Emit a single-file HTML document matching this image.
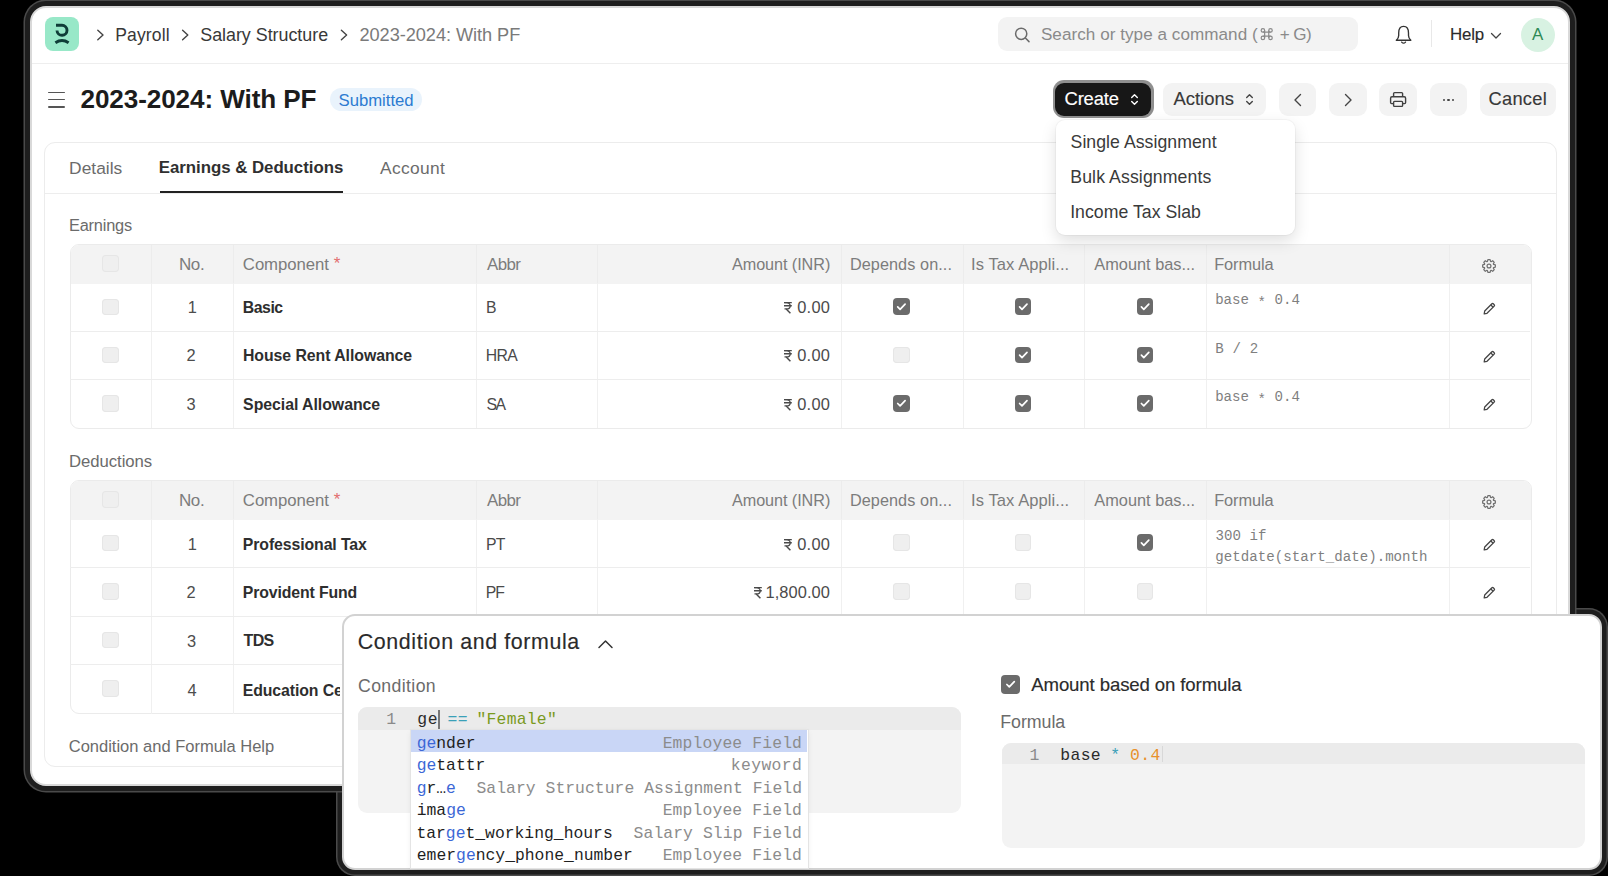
<!DOCTYPE html>
<html><head><meta charset="utf-8"><style>
html,body{margin:0;padding:0;width:1608px;height:876px;overflow:hidden;background:#000;}
body{position:relative;font-family:"Liberation Sans",sans-serif;}
svg{position:absolute;overflow:visible}
</style></head><body>
<div style="position:absolute;left:342px;top:614px;width:1260px;height:256px;border-radius:13px;background:#111;box-shadow:0 0 0 4.5px #1e1e1e,0 0 0 6px #4a4a4a;"></div>
<div style="position:absolute;left:30px;top:6px;width:1540px;height:780px;box-sizing:border-box;background:#fff;border:2px solid #d9d9d9;border-radius:16px;box-shadow:0 0 0 5px #1e1e1e,0 0 0 6.5px #4a4a4a;"></div>
<div style="position:absolute;left:32px;top:63px;width:1536px;height:1px;background:#eeeeee;"></div>
<div style="position:absolute;left:45px;top:17px;width:34px;height:34px;background:#98e8c8;border-radius:8px;"></div>
<svg style="left:0;top:0" width="1" height="1"><g fill="none" stroke="#0f3d38" stroke-width="2.9" stroke-linecap="butt"><path d="M56 25.3 H62 A5 5 0 1 1 57 30.5"/><path d="M55.4 42.7 Q62 38.4 68.6 42.7"/></g></svg>
<svg style="left:0;top:0" width="1" height="1"><path d="M97.8 30.2 L103.0 35.0 L97.8 39.8" fill="none" stroke="#444" stroke-width="1.4" stroke-linecap="round" stroke-linejoin="round"/></svg>
<svg style="left:0;top:0" width="1" height="1"><path d="M182.6 30.2 L187.79999999999998 35.0 L182.6 39.8" fill="none" stroke="#444" stroke-width="1.4" stroke-linecap="round" stroke-linejoin="round"/></svg>
<svg style="left:0;top:0" width="1" height="1"><path d="M341.4 30.2 L346.59999999999997 35.0 L341.4 39.8" fill="none" stroke="#444" stroke-width="1.4" stroke-linecap="round" stroke-linejoin="round"/></svg>
<div id="t0" style="position:absolute;left:115.19px;top:27.00px;font-family:'Liberation Sans', sans-serif;font-size:17.539px;line-height:17.539px;font-weight:400;color:#383838;white-space:pre;letter-spacing:0.142px;">Payroll</div>
<div id="t1" style="position:absolute;left:200.24px;top:27.00px;font-family:'Liberation Sans', sans-serif;font-size:17.882px;line-height:17.882px;font-weight:400;color:#383838;white-space:pre;letter-spacing:-0.019px;">Salary Structure</div>
<div id="t2" style="position:absolute;left:359.48px;top:26.00px;font-family:'Liberation Sans', sans-serif;font-size:18.209px;line-height:18.209px;font-weight:400;color:#7a7a7a;white-space:pre;letter-spacing:-0.055px;">2023-2024: With PF</div>
<div style="position:absolute;left:998px;top:17px;width:360px;height:34px;background:#f3f3f3;border-radius:9px;"></div>
<svg style="left:0;top:0" width="1" height="1"><g fill="none" stroke="#6b6b6b" stroke-width="1.5" stroke-linecap="round"><circle cx="1021.2" cy="33.8" r="5.6"/><path d="M1025.4 38 L1029 41.6"/></g></svg>
<div id="t3" style="position:absolute;left:1040.93px;top:26.00px;font-family:'Liberation Sans', sans-serif;font-size:17.102px;line-height:17.102px;font-weight:400;color:#8a8a8a;white-space:pre;letter-spacing:0.045px;">Search or type a command (</div>
<svg style="left:0;top:0" width="1" height="1"><g fill="none" stroke="#8a8a8a" stroke-width="1.2"><circle cx="1262.9" cy="30.4" r="1.75"/><circle cx="1270.5" cy="30.4" r="1.75"/><circle cx="1262.9" cy="37.9" r="1.75"/><circle cx="1270.5" cy="37.9" r="1.75"/><path d="M1264.65 30.4 V37.9 M1268.75 30.4 V37.9 M1262.9 32.15 H1270.5 M1262.9 36.15 H1270.5"/></g></svg>
<div id="t4" style="position:absolute;left:1279.83px;top:26.00px;font-family:'Liberation Sans', sans-serif;font-size:17.102px;line-height:17.102px;font-weight:400;color:#8a8a8a;white-space:pre;letter-spacing:-0.654px;">+ G)</div>
<svg style="left:0;top:0" width="1" height="1"><g fill="none" stroke="#333" stroke-width="1.35" stroke-linejoin="round" stroke-linecap="round"><path d="M1396.3 40.2 Q1398.7 38.3 1398.7 35.5 V33 Q1398.7 26.4 1403.6 26.4 Q1408.5 26.4 1408.5 33 V35.5 Q1408.5 38.3 1410.9 40.2 Z"/><path d="M1401.7 42.1 Q1403.6 44.3 1405.5 42.1"/></g></svg>
<div style="position:absolute;left:1431px;top:20px;width:1px;height:27px;background:#e8e8e8;"></div>
<div id="t5" style="position:absolute;left:1449.98px;top:27.00px;font-family:'Liberation Sans', sans-serif;font-size:16.867px;line-height:16.867px;font-weight:400;color:#2b2b2b;white-space:pre;letter-spacing:-0.146px;-webkit-text-stroke:0.15px currentColor;">Help</div>
<svg style="left:0;top:0" width="1" height="1"><path d="M1491.5 33.5 L1496 38 L1500.5 33.5" fill="none" stroke="#444" stroke-width="1.3" stroke-linecap="round" stroke-linejoin="round"/></svg>
<div style="position:absolute;left:1521px;top:17.5px;width:34px;height:34.0px;background:#d8f2e2;border-radius:50%;"></div>
<div id="t6" style="position:absolute;left:1532.01px;top:27.00px;font-family:'Liberation Sans', sans-serif;font-size:16.860px;line-height:16.860px;font-weight:400;color:#2e8a55;white-space:pre;letter-spacing:0.000px;">A</div>
<div style="position:absolute;left:47.5px;top:91.5px;width:17.5px;height:1.5px;background:#555;border-radius:1px;"></div>
<div style="position:absolute;left:47.5px;top:98.8px;width:17.5px;height:1.5px;background:#555;border-radius:1px;"></div>
<div style="position:absolute;left:47.5px;top:106px;width:17.5px;height:1.5px;background:#555;border-radius:1px;"></div>
<div id="t7" style="position:absolute;left:80.51px;top:86.00px;font-family:'Liberation Sans', sans-serif;font-size:26.102px;line-height:26.102px;font-weight:700;color:#1c1c1c;white-space:pre;letter-spacing:-0.092px;">2023-2024: With PF</div>
<div style="position:absolute;left:329.5px;top:88px;width:92.5px;height:23px;background:#e9f3fc;border-radius:12px;"></div>
<div id="t8" style="position:absolute;left:338.52px;top:93.00px;font-family:'Liberation Sans', sans-serif;font-size:16.714px;line-height:16.714px;font-weight:400;color:#2c7bd1;white-space:pre;letter-spacing:-0.015px;">Submitted</div>
<div style="position:absolute;left:1052.5px;top:80px;width:101.0px;height:38px;background:#8f8f8f;border-radius:11px;"></div>
<div style="position:absolute;left:1055px;top:82.5px;width:96px;height:33.3px;background:#171717;border-radius:9px;"></div>
<div id="t9" style="position:absolute;left:1064.54px;top:90.00px;font-family:'Liberation Sans', sans-serif;font-size:18.414px;line-height:18.414px;font-weight:400;color:#ffffff;white-space:pre;letter-spacing:-0.178px;-webkit-text-stroke:0.15px currentColor;">Create</div>
<svg style="left:0;top:0" width="1" height="1"><g fill="none" stroke="#ffffff" stroke-width="1.4" stroke-linecap="round" stroke-linejoin="round"><path d="M1131.7 97.5 L1134.5 94.7 L1137.3 97.5"/><path d="M1131.7 101.5 L1134.5 104.3 L1137.3 101.5"/></g></svg>
<div style="position:absolute;left:1163px;top:83px;width:103px;height:32.5px;background:#f3f3f3;border-radius:9px;"></div>
<div id="t10" style="position:absolute;left:1173.39px;top:90.00px;font-family:'Liberation Sans', sans-serif;font-size:18.414px;line-height:18.414px;font-weight:400;color:#383838;white-space:pre;letter-spacing:0.034px;-webkit-text-stroke:0.15px currentColor;">Actions</div>
<svg style="left:0;top:0" width="1" height="1"><g fill="none" stroke="#444" stroke-width="1.4" stroke-linecap="round" stroke-linejoin="round"><path d="M1246.7 97.5 L1249.5 94.7 L1252.3 97.5"/><path d="M1246.7 101.5 L1249.5 104.3 L1252.3 101.5"/></g></svg>
<div style="position:absolute;left:1278.5px;top:83px;width:37.5px;height:32.5px;background:#f3f3f3;border-radius:9px;"></div>
<div style="position:absolute;left:1329px;top:83px;width:38px;height:32.5px;background:#f3f3f3;border-radius:9px;"></div>
<div style="position:absolute;left:1379px;top:83px;width:38px;height:32.5px;background:#f3f3f3;border-radius:9px;"></div>
<div style="position:absolute;left:1430px;top:83px;width:37px;height:32.5px;background:#f3f3f3;border-radius:9px;"></div>
<div style="position:absolute;left:1480px;top:83px;width:75.5px;height:32.5px;background:#f3f3f3;border-radius:9px;"></div>
<svg style="left:0;top:0" width="1" height="1"><g fill="none" stroke="#444" stroke-width="1.4" stroke-linecap="round" stroke-linejoin="round"><path d="M1300.5 94.5 L1295 100 L1300.5 105.5"/><path d="M1345.5 94.5 L1351 100 L1345.5 105.5"/></g></svg>
<svg style="left:0;top:0" width="1" height="1"><g fill="none" stroke="#404040" stroke-width="1.4" stroke-linejoin="round"><path d="M1393.6 96.6 V93.6 Q1393.6 92.6 1394.6 92.6 H1401.6 Q1402.6 92.6 1402.6 93.6 V96.6"/><path d="M1393.4 103.6 H1391.6 Q1390.6 103.6 1390.6 102.6 V98.2 Q1390.6 96.8 1392 96.8 H1404.2 Q1405.6 96.8 1405.6 98.2 V102.6 Q1405.6 103.6 1404.6 103.6 H1402.8"/><rect x="1393.6" y="101.4" width="9" height="5" rx="0.9"/></g></svg>
<div style="position:absolute;left:1443.2px;top:98.9px;width:2.199999999999818px;height:2.1999999999999886px;background:#444;border-radius:50%;"></div>
<div style="position:absolute;left:1447.4px;top:98.9px;width:2.199999999999818px;height:2.1999999999999886px;background:#444;border-radius:50%;"></div>
<div style="position:absolute;left:1451.6000000000001px;top:98.9px;width:2.199999999999818px;height:2.1999999999999886px;background:#444;border-radius:50%;"></div>
<div id="t11" style="position:absolute;left:1488.51px;top:90.00px;font-family:'Liberation Sans', sans-serif;font-size:18.265px;line-height:18.265px;font-weight:400;color:#383838;white-space:pre;letter-spacing:0.279px;-webkit-text-stroke:0.15px currentColor;">Cancel</div>
<div style="position:absolute;left:43.8px;top:142px;width:1511px;height:623px;border:1px solid #ececec;border-radius:11px;"></div>
<div style="position:absolute;left:45px;top:193px;width:1511px;height:1px;background:#ededed;"></div>
<div id="t12" style="position:absolute;left:69.12px;top:160.00px;font-family:'Liberation Sans', sans-serif;font-size:17.366px;line-height:17.366px;font-weight:400;color:#6b6b6b;white-space:pre;letter-spacing:0.019px;">Details</div>
<div id="t13" style="position:absolute;left:158.82px;top:160.00px;font-family:'Liberation Sans', sans-serif;font-size:16.831px;line-height:16.831px;font-weight:700;color:#303030;white-space:pre;letter-spacing:-0.035px;">Earnings &amp; Deductions</div>
<div id="t14" style="position:absolute;left:379.98px;top:160.00px;font-family:'Liberation Sans', sans-serif;font-size:17.366px;line-height:17.366px;font-weight:400;color:#6b6b6b;white-space:pre;letter-spacing:0.339px;">Account</div>
<div style="position:absolute;left:159.6px;top:191.2px;width:183.79999999999998px;height:1.8000000000000114px;background:#222;"></div>
<div id="t15" style="position:absolute;left:68.93px;top:217.00px;font-family:'Liberation Sans', sans-serif;font-size:16.395px;line-height:16.395px;font-weight:400;color:#6b6b6b;white-space:pre;letter-spacing:-0.190px;">Earnings</div>
<div style="position:absolute;left:69.5px;top:243.5px;width:1460px;height:183.09999999999997px;border:1px solid #ebebeb;border-radius:9px;overflow:hidden;"><div style="position:absolute;left:0;top:0;right:0;height:39.2px;background:#f3f3f3;"></div></div>
<div style="position:absolute;left:151px;top:245px;width:1px;height:38.19999999999999px;background:#ececec;"></div>
<div style="position:absolute;left:151px;top:283.2px;width:1px;height:144.89999999999998px;background:#f0f0f0;"></div>
<div style="position:absolute;left:233px;top:245px;width:1px;height:38.19999999999999px;background:#ececec;"></div>
<div style="position:absolute;left:233px;top:283.2px;width:1px;height:144.89999999999998px;background:#f0f0f0;"></div>
<div style="position:absolute;left:476px;top:245px;width:1px;height:38.19999999999999px;background:#ececec;"></div>
<div style="position:absolute;left:476px;top:283.2px;width:1px;height:144.89999999999998px;background:#f0f0f0;"></div>
<div style="position:absolute;left:597px;top:245px;width:1px;height:38.19999999999999px;background:#ececec;"></div>
<div style="position:absolute;left:597px;top:283.2px;width:1px;height:144.89999999999998px;background:#f0f0f0;"></div>
<div style="position:absolute;left:841px;top:245px;width:1px;height:38.19999999999999px;background:#ececec;"></div>
<div style="position:absolute;left:841px;top:283.2px;width:1px;height:144.89999999999998px;background:#f0f0f0;"></div>
<div style="position:absolute;left:962.5px;top:245px;width:1.0px;height:38.19999999999999px;background:#ececec;"></div>
<div style="position:absolute;left:962.5px;top:283.2px;width:1.0px;height:144.89999999999998px;background:#f0f0f0;"></div>
<div style="position:absolute;left:1083.5px;top:245px;width:1.0px;height:38.19999999999999px;background:#ececec;"></div>
<div style="position:absolute;left:1083.5px;top:283.2px;width:1.0px;height:144.89999999999998px;background:#f0f0f0;"></div>
<div style="position:absolute;left:1205.5px;top:245px;width:1.0px;height:38.19999999999999px;background:#ececec;"></div>
<div style="position:absolute;left:1205.5px;top:283.2px;width:1.0px;height:144.89999999999998px;background:#f0f0f0;"></div>
<div style="position:absolute;left:1449px;top:245px;width:1px;height:38.19999999999999px;background:#ececec;"></div>
<div style="position:absolute;left:1449px;top:283.2px;width:1px;height:144.89999999999998px;background:#f0f0f0;"></div>
<div style="position:absolute;left:70px;top:331px;width:1460px;height:1px;background:#ededed;"></div>
<div style="position:absolute;left:70px;top:379px;width:1460px;height:1px;background:#ededed;"></div>
<div style="position:absolute;left:102.3px;top:255.2px;width:16.599999999999994px;height:16.600000000000023px;background:#efefef;border-radius:4px;box-shadow:inset 0 0 0 1px #e6e6e6;"></div>
<div id="t16" style="position:absolute;left:178.90px;top:256.00px;font-family:'Liberation Sans', sans-serif;font-size:17.006px;line-height:17.006px;font-weight:400;color:#7c7c7c;white-space:pre;letter-spacing:-0.361px;">No.</div>
<div id="t17" style="position:absolute;left:242.87px;top:257.00px;font-family:'Liberation Sans', sans-serif;font-size:16.750px;line-height:16.750px;font-weight:400;color:#7c7c7c;white-space:pre;letter-spacing:-0.078px;">Component</div>
<div id="t18" style="position:absolute;left:333.76px;top:255.00px;font-family:'Liberation Sans', sans-serif;font-size:17.006px;line-height:17.006px;font-weight:400;color:#e26d6d;white-space:pre;letter-spacing:0.000px;">*</div>
<div id="t19" style="position:absolute;left:487.01px;top:257.00px;font-family:'Liberation Sans', sans-serif;font-size:16.902px;line-height:16.902px;font-weight:400;color:#7c7c7c;white-space:pre;letter-spacing:-0.617px;">Abbr</div>
<div id="t20" style="position:absolute;left:732.01px;top:256.00px;font-family:'Liberation Sans', sans-serif;font-size:16.213px;line-height:16.213px;font-weight:400;color:#7c7c7c;white-space:pre;letter-spacing:-0.069px;">Amount (INR)</div>
<div id="t21" style="position:absolute;left:849.90px;top:256.00px;font-family:'Liberation Sans', sans-serif;font-size:16.247px;line-height:16.247px;font-weight:400;color:#7c7c7c;white-space:pre;letter-spacing:0.079px;">Depends on...</div>
<div id="t22" style="position:absolute;left:971.11px;top:257.00px;font-family:'Liberation Sans', sans-serif;font-size:16.542px;line-height:16.542px;font-weight:400;color:#7c7c7c;white-space:pre;letter-spacing:0.066px;">Is Tax Appli...</div>
<div id="t23" style="position:absolute;left:1094.30px;top:256.00px;font-family:'Liberation Sans', sans-serif;font-size:16.358px;line-height:16.358px;font-weight:400;color:#7c7c7c;white-space:pre;letter-spacing:-0.003px;">Amount bas...</div>
<div id="t24" style="position:absolute;left:1214.19px;top:256.00px;font-family:'Liberation Sans', sans-serif;font-size:16.383px;line-height:16.383px;font-weight:400;color:#7c7c7c;white-space:pre;letter-spacing:-0.101px;">Formula</div>
<svg style="left:1480.2px;top:256.7px" width="18" height="18" viewBox="0 0 24 24"><g fill="none" stroke="#707070" stroke-width="1.6" stroke-linejoin="round"><path d="M9.92 5.95 L10.51 3.53 L13.49 3.53 L14.08 5.95 L14.81 6.25 L16.93 4.96 L19.04 7.07 L17.75 9.19 L18.05 9.92 L20.47 10.51 L20.47 13.49 L18.05 14.08 L17.75 14.81 L19.04 16.93 L16.93 19.04 L14.81 17.75 L14.08 18.05 L13.49 20.47 L10.51 20.47 L9.92 18.05 L9.19 17.75 L7.07 19.04 L4.96 16.93 L6.25 14.81 L5.95 14.08 L3.53 13.49 L3.53 10.51 L5.95 9.92 L6.25 9.19 L4.96 7.07 L7.07 4.96 L9.19 6.25 Z"/><circle cx="12" cy="12" r="2.6"/></g></svg>
<div style="position:absolute;left:102.3px;top:298.5px;width:16.599999999999994px;height:16.600000000000023px;background:#efefef;border-radius:4px;box-shadow:inset 0 0 0 1px #e6e6e6;"></div>
<div id="t25" style="position:absolute;left:187.87px;top:299.00px;font-family:'Liberation Sans', sans-serif;font-size:16.424px;line-height:16.424px;font-weight:400;color:#4d4d4d;white-space:pre;letter-spacing:0.000px;">1</div>
<div id="t26" style="position:absolute;left:242.81px;top:300.00px;font-family:'Liberation Sans', sans-serif;font-size:15.849px;line-height:15.849px;font-weight:700;color:#2e2e2e;white-space:pre;letter-spacing:-0.477px;">Basic</div>
<div id="t27" style="position:absolute;left:485.97px;top:300.00px;font-family:'Liberation Sans', sans-serif;font-size:15.791px;line-height:15.791px;font-weight:400;color:#4a4a4a;white-space:pre;letter-spacing:0.000px;">B</div>
<svg style="left:784px;top:301.7px" width="9" height="12" viewBox="0 0 9 12"><g fill="none" stroke="#4a4a4a" stroke-width="1.3" stroke-linecap="butt"><path d="M0 0.65 H7.8 M0 3.75 H7.8"/><path d="M0.3 0.65 H2.4 C5.2 0.65 6.2 2.2 6.2 3.9 C6.2 5.7 4.9 6.9 2.4 6.9 H0.5"/><path d="M2.2 6.9 L6.4 11.3" stroke-width="1.45"/></g></svg>
<div id="t28" style="position:absolute;left:797.18px;top:299.00px;font-family:'Liberation Sans', sans-serif;font-size:16.424px;line-height:16.424px;font-weight:400;color:#4a4a4a;white-space:pre;letter-spacing:0.296px;">0.00</div>
<div style="position:absolute;left:893.0px;top:298.4px;width:16.59999999999991px;height:16.600000000000023px;background:#6b6b6b;border-radius:4px;"></div>
<svg style="left:0;top:0" width="1" height="1"><path d="M897.6999999999999 306.9 L900.0999999999999 309.3 L905.0999999999999 304.09999999999997" fill="none" stroke="#fff" stroke-width="1.7" stroke-linecap="round" stroke-linejoin="round"/></svg>
<div style="position:absolute;left:1014.9000000000001px;top:298.4px;width:16.59999999999991px;height:16.600000000000023px;background:#6b6b6b;border-radius:4px;"></div>
<svg style="left:0;top:0" width="1" height="1"><path d="M1019.6 306.9 L1022.0 309.3 L1027.0 304.09999999999997" fill="none" stroke="#fff" stroke-width="1.7" stroke-linecap="round" stroke-linejoin="round"/></svg>
<div style="position:absolute;left:1136.7px;top:298.4px;width:16.59999999999991px;height:16.600000000000023px;background:#6b6b6b;border-radius:4px;"></div>
<svg style="left:0;top:0" width="1" height="1"><path d="M1141.4 306.9 L1143.8 309.3 L1148.8 304.09999999999997" fill="none" stroke="#fff" stroke-width="1.7" stroke-linecap="round" stroke-linejoin="round"/></svg>
<div id="t29" style="position:absolute;left:1215.15px;top:293.00px;font-family:'Liberation Mono', monospace;font-size:14.120px;line-height:14.120px;font-weight:400;color:#7f7f7f;white-space:pre;letter-spacing:0.009px;">base <span style="position:relative;top:2.5px">*</span> 0.4</div>
<svg style="left:1481px;top:300.8px" width="16" height="16" viewBox="0 0 16 16"><g fill="none" stroke="#444" stroke-width="1.3" stroke-linejoin="round"><path d="M3.2 12.8 L3.7 10 L10.9 2.8 Q11.6 2.1 12.3 2.8 L13.2 3.7 Q13.9 4.4 13.2 5.1 L6 12.3 Z"/><path d="M9.8 3.9 L12.1 6.2"/></g></svg>
<div style="position:absolute;left:102.3px;top:346.8px;width:16.599999999999994px;height:16.600000000000023px;background:#efefef;border-radius:4px;box-shadow:inset 0 0 0 1px #e6e6e6;"></div>
<div id="t30" style="position:absolute;left:186.62px;top:347.00px;font-family:'Liberation Sans', sans-serif;font-size:16.424px;line-height:16.424px;font-weight:400;color:#4d4d4d;white-space:pre;letter-spacing:0.000px;">2</div>
<div id="t31" style="position:absolute;left:242.90px;top:348.00px;font-family:'Liberation Sans', sans-serif;font-size:15.849px;line-height:15.849px;font-weight:700;color:#2e2e2e;white-space:pre;letter-spacing:-0.042px;">House Rent Allowance</div>
<div id="t32" style="position:absolute;left:485.74px;top:348.00px;font-family:'Liberation Sans', sans-serif;font-size:15.791px;line-height:15.791px;font-weight:400;color:#4a4a4a;white-space:pre;letter-spacing:-0.596px;">HRA</div>
<svg style="left:784px;top:349.7px" width="9" height="12" viewBox="0 0 9 12"><g fill="none" stroke="#4a4a4a" stroke-width="1.3" stroke-linecap="butt"><path d="M0 0.65 H7.8 M0 3.75 H7.8"/><path d="M0.3 0.65 H2.4 C5.2 0.65 6.2 2.2 6.2 3.9 C6.2 5.7 4.9 6.9 2.4 6.9 H0.5"/><path d="M2.2 6.9 L6.4 11.3" stroke-width="1.45"/></g></svg>
<div id="t33" style="position:absolute;left:797.18px;top:347.00px;font-family:'Liberation Sans', sans-serif;font-size:16.424px;line-height:16.424px;font-weight:400;color:#4a4a4a;white-space:pre;letter-spacing:0.296px;">0.00</div>
<div style="position:absolute;left:893.0px;top:346.7px;width:16.59999999999991px;height:16.600000000000023px;background:#efefef;border-radius:4px;box-shadow:inset 0 0 0 1px #e6e6e6;"></div>
<div style="position:absolute;left:1014.9000000000001px;top:346.7px;width:16.59999999999991px;height:16.600000000000023px;background:#6b6b6b;border-radius:4px;"></div>
<svg style="left:0;top:0" width="1" height="1"><path d="M1019.6 355.2 L1022.0 357.6 L1027.0 352.4" fill="none" stroke="#fff" stroke-width="1.7" stroke-linecap="round" stroke-linejoin="round"/></svg>
<div style="position:absolute;left:1136.7px;top:346.7px;width:16.59999999999991px;height:16.600000000000023px;background:#6b6b6b;border-radius:4px;"></div>
<svg style="left:0;top:0" width="1" height="1"><path d="M1141.4 355.2 L1143.8 357.6 L1148.8 352.4" fill="none" stroke="#fff" stroke-width="1.7" stroke-linecap="round" stroke-linejoin="round"/></svg>
<div id="t34" style="position:absolute;left:1215.37px;top:342.00px;font-family:'Liberation Mono', monospace;font-size:14.120px;line-height:14.120px;font-weight:400;color:#7f7f7f;white-space:pre;letter-spacing:0.154px;">B / 2</div>
<svg style="left:1481px;top:349.1px" width="16" height="16" viewBox="0 0 16 16"><g fill="none" stroke="#444" stroke-width="1.3" stroke-linejoin="round"><path d="M3.2 12.8 L3.7 10 L10.9 2.8 Q11.6 2.1 12.3 2.8 L13.2 3.7 Q13.9 4.4 13.2 5.1 L6 12.3 Z"/><path d="M9.8 3.9 L12.1 6.2"/></g></svg>
<div style="position:absolute;left:102.3px;top:395.09999999999997px;width:16.599999999999994px;height:16.600000000000023px;background:#efefef;border-radius:4px;box-shadow:inset 0 0 0 1px #e6e6e6;"></div>
<div id="t35" style="position:absolute;left:186.62px;top:396.00px;font-family:'Liberation Sans', sans-serif;font-size:16.424px;line-height:16.424px;font-weight:400;color:#4d4d4d;white-space:pre;letter-spacing:0.000px;">3</div>
<div id="t36" style="position:absolute;left:243.10px;top:397.00px;font-family:'Liberation Sans', sans-serif;font-size:15.870px;line-height:15.870px;font-weight:700;color:#2e2e2e;white-space:pre;letter-spacing:-0.046px;">Special Allowance</div>
<div id="t37" style="position:absolute;left:486.40px;top:397.00px;font-family:'Liberation Sans', sans-serif;font-size:15.791px;line-height:15.791px;font-weight:400;color:#4a4a4a;white-space:pre;letter-spacing:-1.374px;">SA</div>
<svg style="left:784px;top:398.7px" width="9" height="12" viewBox="0 0 9 12"><g fill="none" stroke="#4a4a4a" stroke-width="1.3" stroke-linecap="butt"><path d="M0 0.65 H7.8 M0 3.75 H7.8"/><path d="M0.3 0.65 H2.4 C5.2 0.65 6.2 2.2 6.2 3.9 C6.2 5.7 4.9 6.9 2.4 6.9 H0.5"/><path d="M2.2 6.9 L6.4 11.3" stroke-width="1.45"/></g></svg>
<div id="t38" style="position:absolute;left:797.18px;top:396.00px;font-family:'Liberation Sans', sans-serif;font-size:16.424px;line-height:16.424px;font-weight:400;color:#4a4a4a;white-space:pre;letter-spacing:0.296px;">0.00</div>
<div style="position:absolute;left:893.0px;top:394.99999999999994px;width:16.59999999999991px;height:16.600000000000023px;background:#6b6b6b;border-radius:4px;"></div>
<svg style="left:0;top:0" width="1" height="1"><path d="M897.6999999999999 403.49999999999994 L900.0999999999999 405.9 L905.0999999999999 400.69999999999993" fill="none" stroke="#fff" stroke-width="1.7" stroke-linecap="round" stroke-linejoin="round"/></svg>
<div style="position:absolute;left:1014.9000000000001px;top:394.99999999999994px;width:16.59999999999991px;height:16.600000000000023px;background:#6b6b6b;border-radius:4px;"></div>
<svg style="left:0;top:0" width="1" height="1"><path d="M1019.6 403.49999999999994 L1022.0 405.9 L1027.0 400.69999999999993" fill="none" stroke="#fff" stroke-width="1.7" stroke-linecap="round" stroke-linejoin="round"/></svg>
<div style="position:absolute;left:1136.7px;top:394.99999999999994px;width:16.59999999999991px;height:16.600000000000023px;background:#6b6b6b;border-radius:4px;"></div>
<svg style="left:0;top:0" width="1" height="1"><path d="M1141.4 403.49999999999994 L1143.8 405.9 L1148.8 400.69999999999993" fill="none" stroke="#fff" stroke-width="1.7" stroke-linecap="round" stroke-linejoin="round"/></svg>
<div id="t39" style="position:absolute;left:1215.15px;top:390.00px;font-family:'Liberation Mono', monospace;font-size:14.120px;line-height:14.120px;font-weight:400;color:#7f7f7f;white-space:pre;letter-spacing:0.009px;">base <span style="position:relative;top:2.5px">*</span> 0.4</div>
<svg style="left:1481px;top:397.4px" width="16" height="16" viewBox="0 0 16 16"><g fill="none" stroke="#444" stroke-width="1.3" stroke-linejoin="round"><path d="M3.2 12.8 L3.7 10 L10.9 2.8 Q11.6 2.1 12.3 2.8 L13.2 3.7 Q13.9 4.4 13.2 5.1 L6 12.3 Z"/><path d="M9.8 3.9 L12.1 6.2"/></g></svg>
<div id="t40" style="position:absolute;left:68.90px;top:454.00px;font-family:'Liberation Sans', sans-serif;font-size:16.729px;line-height:16.729px;font-weight:400;color:#6b6b6b;white-space:pre;letter-spacing:-0.037px;">Deductions</div>
<div style="position:absolute;left:69.5px;top:479.7px;width:1460px;height:232.40000000000003px;border:1px solid #ebebeb;border-radius:9px;overflow:hidden;"><div style="position:absolute;left:0;top:0;right:0;height:39px;background:#f3f3f3;"></div></div>
<div style="position:absolute;left:151px;top:481.2px;width:1px;height:38.00000000000006px;background:#ececec;"></div>
<div style="position:absolute;left:151px;top:519.2px;width:1px;height:194.39999999999998px;background:#f0f0f0;"></div>
<div style="position:absolute;left:233px;top:481.2px;width:1px;height:38.00000000000006px;background:#ececec;"></div>
<div style="position:absolute;left:233px;top:519.2px;width:1px;height:194.39999999999998px;background:#f0f0f0;"></div>
<div style="position:absolute;left:476px;top:481.2px;width:1px;height:38.00000000000006px;background:#ececec;"></div>
<div style="position:absolute;left:476px;top:519.2px;width:1px;height:194.39999999999998px;background:#f0f0f0;"></div>
<div style="position:absolute;left:597px;top:481.2px;width:1px;height:38.00000000000006px;background:#ececec;"></div>
<div style="position:absolute;left:597px;top:519.2px;width:1px;height:194.39999999999998px;background:#f0f0f0;"></div>
<div style="position:absolute;left:841px;top:481.2px;width:1px;height:38.00000000000006px;background:#ececec;"></div>
<div style="position:absolute;left:841px;top:519.2px;width:1px;height:194.39999999999998px;background:#f0f0f0;"></div>
<div style="position:absolute;left:962.5px;top:481.2px;width:1.0px;height:38.00000000000006px;background:#ececec;"></div>
<div style="position:absolute;left:962.5px;top:519.2px;width:1.0px;height:194.39999999999998px;background:#f0f0f0;"></div>
<div style="position:absolute;left:1083.5px;top:481.2px;width:1.0px;height:38.00000000000006px;background:#ececec;"></div>
<div style="position:absolute;left:1083.5px;top:519.2px;width:1.0px;height:194.39999999999998px;background:#f0f0f0;"></div>
<div style="position:absolute;left:1205.5px;top:481.2px;width:1.0px;height:38.00000000000006px;background:#ececec;"></div>
<div style="position:absolute;left:1205.5px;top:519.2px;width:1.0px;height:194.39999999999998px;background:#f0f0f0;"></div>
<div style="position:absolute;left:1449px;top:481.2px;width:1px;height:38.00000000000006px;background:#ececec;"></div>
<div style="position:absolute;left:1449px;top:519.2px;width:1px;height:194.39999999999998px;background:#f0f0f0;"></div>
<div style="position:absolute;left:70px;top:567px;width:1460px;height:1px;background:#ededed;"></div>
<div style="position:absolute;left:70px;top:616px;width:1460px;height:1px;background:#ededed;"></div>
<div style="position:absolute;left:70px;top:664px;width:1460px;height:1px;background:#ededed;"></div>
<div style="position:absolute;left:102.3px;top:491.4px;width:16.599999999999994px;height:16.600000000000023px;background:#efefef;border-radius:4px;box-shadow:inset 0 0 0 1px #e6e6e6;"></div>
<div id="t41" style="position:absolute;left:178.90px;top:492.00px;font-family:'Liberation Sans', sans-serif;font-size:17.006px;line-height:17.006px;font-weight:400;color:#7c7c7c;white-space:pre;letter-spacing:-0.361px;">No.</div>
<div id="t42" style="position:absolute;left:242.87px;top:493.00px;font-family:'Liberation Sans', sans-serif;font-size:16.750px;line-height:16.750px;font-weight:400;color:#7c7c7c;white-space:pre;letter-spacing:-0.078px;">Component</div>
<div id="t43" style="position:absolute;left:333.76px;top:491.00px;font-family:'Liberation Sans', sans-serif;font-size:17.006px;line-height:17.006px;font-weight:400;color:#e26d6d;white-space:pre;letter-spacing:0.000px;">*</div>
<div id="t44" style="position:absolute;left:487.01px;top:493.00px;font-family:'Liberation Sans', sans-serif;font-size:16.902px;line-height:16.902px;font-weight:400;color:#7c7c7c;white-space:pre;letter-spacing:-0.617px;">Abbr</div>
<div id="t45" style="position:absolute;left:732.01px;top:492.00px;font-family:'Liberation Sans', sans-serif;font-size:16.213px;line-height:16.213px;font-weight:400;color:#7c7c7c;white-space:pre;letter-spacing:-0.069px;">Amount (INR)</div>
<div id="t46" style="position:absolute;left:849.90px;top:492.00px;font-family:'Liberation Sans', sans-serif;font-size:16.247px;line-height:16.247px;font-weight:400;color:#7c7c7c;white-space:pre;letter-spacing:0.079px;">Depends on...</div>
<div id="t47" style="position:absolute;left:971.11px;top:493.00px;font-family:'Liberation Sans', sans-serif;font-size:16.542px;line-height:16.542px;font-weight:400;color:#7c7c7c;white-space:pre;letter-spacing:0.066px;">Is Tax Appli...</div>
<div id="t48" style="position:absolute;left:1094.30px;top:492.00px;font-family:'Liberation Sans', sans-serif;font-size:16.358px;line-height:16.358px;font-weight:400;color:#7c7c7c;white-space:pre;letter-spacing:-0.003px;">Amount bas...</div>
<div id="t49" style="position:absolute;left:1214.19px;top:492.00px;font-family:'Liberation Sans', sans-serif;font-size:16.383px;line-height:16.383px;font-weight:400;color:#7c7c7c;white-space:pre;letter-spacing:-0.101px;">Formula</div>
<svg style="left:1480.2px;top:492.9px" width="18" height="18" viewBox="0 0 24 24"><g fill="none" stroke="#707070" stroke-width="1.6" stroke-linejoin="round"><path d="M9.92 5.95 L10.51 3.53 L13.49 3.53 L14.08 5.95 L14.81 6.25 L16.93 4.96 L19.04 7.07 L17.75 9.19 L18.05 9.92 L20.47 10.51 L20.47 13.49 L18.05 14.08 L17.75 14.81 L19.04 16.93 L16.93 19.04 L14.81 17.75 L14.08 18.05 L13.49 20.47 L10.51 20.47 L9.92 18.05 L9.19 17.75 L7.07 19.04 L4.96 16.93 L6.25 14.81 L5.95 14.08 L3.53 13.49 L3.53 10.51 L5.95 9.92 L6.25 9.19 L4.96 7.07 L7.07 4.96 L9.19 6.25 Z"/><circle cx="12" cy="12" r="2.6"/></g></svg>
<div style="position:absolute;left:102.3px;top:534.5000000000001px;width:16.599999999999994px;height:16.59999999999991px;background:#efefef;border-radius:4px;box-shadow:inset 0 0 0 1px #e6e6e6;"></div>
<div id="t50" style="position:absolute;left:187.87px;top:536.00px;font-family:'Liberation Sans', sans-serif;font-size:16.424px;line-height:16.424px;font-weight:400;color:#4d4d4d;white-space:pre;letter-spacing:0.000px;">1</div>
<div id="t51" style="position:absolute;left:242.79px;top:537.00px;font-family:'Liberation Sans', sans-serif;font-size:15.849px;line-height:15.849px;font-weight:700;color:#2e2e2e;white-space:pre;letter-spacing:-0.095px;">Professional Tax</div>
<div id="t52" style="position:absolute;left:486.09px;top:537.00px;font-family:'Liberation Sans', sans-serif;font-size:15.791px;line-height:15.791px;font-weight:400;color:#4a4a4a;white-space:pre;letter-spacing:-0.847px;">PT</div>
<svg style="left:784px;top:538.7px" width="9" height="12" viewBox="0 0 9 12"><g fill="none" stroke="#4a4a4a" stroke-width="1.3" stroke-linecap="butt"><path d="M0 0.65 H7.8 M0 3.75 H7.8"/><path d="M0.3 0.65 H2.4 C5.2 0.65 6.2 2.2 6.2 3.9 C6.2 5.7 4.9 6.9 2.4 6.9 H0.5"/><path d="M2.2 6.9 L6.4 11.3" stroke-width="1.45"/></g></svg>
<div id="t53" style="position:absolute;left:797.18px;top:536.00px;font-family:'Liberation Sans', sans-serif;font-size:16.424px;line-height:16.424px;font-weight:400;color:#4a4a4a;white-space:pre;letter-spacing:0.296px;">0.00</div>
<div style="position:absolute;left:893.0px;top:534.4000000000001px;width:16.59999999999991px;height:16.59999999999991px;background:#efefef;border-radius:4px;box-shadow:inset 0 0 0 1px #e6e6e6;"></div>
<div style="position:absolute;left:1014.9000000000001px;top:534.4000000000001px;width:16.59999999999991px;height:16.59999999999991px;background:#efefef;border-radius:4px;box-shadow:inset 0 0 0 1px #e6e6e6;"></div>
<div style="position:absolute;left:1136.7px;top:534.4000000000001px;width:16.59999999999991px;height:16.59999999999991px;background:#6b6b6b;border-radius:4px;"></div>
<svg style="left:0;top:0" width="1" height="1"><path d="M1141.4 542.9000000000001 L1143.8 545.3000000000001 L1148.8 540.1" fill="none" stroke="#fff" stroke-width="1.7" stroke-linecap="round" stroke-linejoin="round"/></svg>
<div id="t54" style="position:absolute;left:1215.56px;top:529.00px;font-family:'Liberation Mono', monospace;font-size:14.120px;line-height:14.120px;font-weight:400;color:#7f7f7f;white-space:pre;letter-spacing:0.032px;">300 if</div>
<div id="t55" style="position:absolute;left:1215.34px;top:550.00px;font-family:'Liberation Mono', monospace;font-size:14.120px;line-height:14.120px;font-weight:400;color:#7f7f7f;white-space:pre;letter-spacing:0.023px;">getdate(start_date).month</div>
<svg style="left:1481px;top:536.8000000000001px" width="16" height="16" viewBox="0 0 16 16"><g fill="none" stroke="#444" stroke-width="1.3" stroke-linejoin="round"><path d="M3.2 12.8 L3.7 10 L10.9 2.8 Q11.6 2.1 12.3 2.8 L13.2 3.7 Q13.9 4.4 13.2 5.1 L6 12.3 Z"/><path d="M9.8 3.9 L12.1 6.2"/></g></svg>
<div style="position:absolute;left:102.3px;top:583.1000000000001px;width:16.599999999999994px;height:16.59999999999991px;background:#efefef;border-radius:4px;box-shadow:inset 0 0 0 1px #e6e6e6;"></div>
<div id="t56" style="position:absolute;left:186.62px;top:584.00px;font-family:'Liberation Sans', sans-serif;font-size:16.424px;line-height:16.424px;font-weight:400;color:#4d4d4d;white-space:pre;letter-spacing:0.000px;">2</div>
<div id="t57" style="position:absolute;left:242.79px;top:585.00px;font-family:'Liberation Sans', sans-serif;font-size:15.849px;line-height:15.849px;font-weight:700;color:#2e2e2e;white-space:pre;letter-spacing:-0.121px;">Provident Fund</div>
<div id="t58" style="position:absolute;left:485.74px;top:585.00px;font-family:'Liberation Sans', sans-serif;font-size:15.791px;line-height:15.791px;font-weight:400;color:#4a4a4a;white-space:pre;letter-spacing:-1.104px;">PF</div>
<svg style="left:754px;top:586.7px" width="9" height="12" viewBox="0 0 9 12"><g fill="none" stroke="#4a4a4a" stroke-width="1.3" stroke-linecap="butt"><path d="M0 0.65 H7.8 M0 3.75 H7.8"/><path d="M0.3 0.65 H2.4 C5.2 0.65 6.2 2.2 6.2 3.9 C6.2 5.7 4.9 6.9 2.4 6.9 H0.5"/><path d="M2.2 6.9 L6.4 11.3" stroke-width="1.45"/></g></svg>
<div id="t59" style="position:absolute;left:765.46px;top:584.00px;font-family:'Liberation Sans', sans-serif;font-size:16.424px;line-height:16.424px;font-weight:400;color:#4a4a4a;white-space:pre;letter-spacing:0.088px;">1,800.00</div>
<div style="position:absolute;left:893.0px;top:583.0000000000001px;width:16.59999999999991px;height:16.59999999999991px;background:#efefef;border-radius:4px;box-shadow:inset 0 0 0 1px #e6e6e6;"></div>
<div style="position:absolute;left:1014.9000000000001px;top:583.0000000000001px;width:16.59999999999991px;height:16.59999999999991px;background:#efefef;border-radius:4px;box-shadow:inset 0 0 0 1px #e6e6e6;"></div>
<div style="position:absolute;left:1136.7px;top:583.0000000000001px;width:16.59999999999991px;height:16.59999999999991px;background:#efefef;border-radius:4px;box-shadow:inset 0 0 0 1px #e6e6e6;"></div>
<svg style="left:1481px;top:585.4000000000001px" width="16" height="16" viewBox="0 0 16 16"><g fill="none" stroke="#444" stroke-width="1.3" stroke-linejoin="round"><path d="M3.2 12.8 L3.7 10 L10.9 2.8 Q11.6 2.1 12.3 2.8 L13.2 3.7 Q13.9 4.4 13.2 5.1 L6 12.3 Z"/><path d="M9.8 3.9 L12.1 6.2"/></g></svg>
<div style="position:absolute;left:102.3px;top:631.7000000000002px;width:16.599999999999994px;height:16.59999999999991px;background:#efefef;border-radius:4px;box-shadow:inset 0 0 0 1px #e6e6e6;"></div>
<div id="t60" style="position:absolute;left:187.02px;top:633.00px;font-family:'Liberation Sans', sans-serif;font-size:16.424px;line-height:16.424px;font-weight:400;color:#4d4d4d;white-space:pre;letter-spacing:0.000px;">3</div>
<div id="t61" style="position:absolute;left:243.59px;top:633.00px;font-family:'Liberation Sans', sans-serif;font-size:16.017px;line-height:16.017px;font-weight:700;color:#2e2e2e;white-space:pre;letter-spacing:-0.664px;">TDS</div>
<div id="t62" style="position:absolute;left:487.90px;top:633.00px;font-family:'Liberation Sans', sans-serif;font-size:16.279px;line-height:16.279px;font-weight:400;color:#4a4a4a;white-space:pre;letter-spacing:0.000px;"></div>
<div style="position:absolute;left:893.0px;top:631.6000000000001px;width:16.59999999999991px;height:16.59999999999991px;background:#efefef;border-radius:4px;box-shadow:inset 0 0 0 1px #e6e6e6;"></div>
<div style="position:absolute;left:1014.9000000000001px;top:631.6000000000001px;width:16.59999999999991px;height:16.59999999999991px;background:#efefef;border-radius:4px;box-shadow:inset 0 0 0 1px #e6e6e6;"></div>
<div style="position:absolute;left:1136.7px;top:631.6000000000001px;width:16.59999999999991px;height:16.59999999999991px;background:#efefef;border-radius:4px;box-shadow:inset 0 0 0 1px #e6e6e6;"></div>
<svg style="left:1481px;top:634.0000000000001px" width="16" height="16" viewBox="0 0 16 16"><g fill="none" stroke="#444" stroke-width="1.3" stroke-linejoin="round"><path d="M3.2 12.8 L3.7 10 L10.9 2.8 Q11.6 2.1 12.3 2.8 L13.2 3.7 Q13.9 4.4 13.2 5.1 L6 12.3 Z"/><path d="M9.8 3.9 L12.1 6.2"/></g></svg>
<div style="position:absolute;left:102.3px;top:680.3000000000001px;width:16.599999999999994px;height:16.59999999999991px;background:#efefef;border-radius:4px;box-shadow:inset 0 0 0 1px #e6e6e6;"></div>
<div id="t63" style="position:absolute;left:187.47px;top:682.00px;font-family:'Liberation Sans', sans-serif;font-size:16.424px;line-height:16.424px;font-weight:400;color:#4d4d4d;white-space:pre;letter-spacing:0.000px;">4</div>
<div id="t64" style="position:absolute;left:242.79px;top:683.00px;font-family:'Liberation Sans', sans-serif;font-size:15.849px;line-height:15.849px;font-weight:700;color:#2e2e2e;white-space:pre;letter-spacing:-0.105px;width:97px;overflow:hidden;">Education Cess</div>
<div id="t65" style="position:absolute;left:487.00px;top:682.00px;font-family:'Liberation Sans', sans-serif;font-size:16.279px;line-height:16.279px;font-weight:400;color:#4a4a4a;white-space:pre;letter-spacing:0.000px;"></div>
<div style="position:absolute;left:893.0px;top:680.2px;width:16.59999999999991px;height:16.59999999999991px;background:#efefef;border-radius:4px;box-shadow:inset 0 0 0 1px #e6e6e6;"></div>
<div style="position:absolute;left:1014.9000000000001px;top:680.2px;width:16.59999999999991px;height:16.59999999999991px;background:#efefef;border-radius:4px;box-shadow:inset 0 0 0 1px #e6e6e6;"></div>
<div style="position:absolute;left:1136.7px;top:680.2px;width:16.59999999999991px;height:16.59999999999991px;background:#efefef;border-radius:4px;box-shadow:inset 0 0 0 1px #e6e6e6;"></div>
<svg style="left:1481px;top:682.6px" width="16" height="16" viewBox="0 0 16 16"><g fill="none" stroke="#444" stroke-width="1.3" stroke-linejoin="round"><path d="M3.2 12.8 L3.7 10 L10.9 2.8 Q11.6 2.1 12.3 2.8 L13.2 3.7 Q13.9 4.4 13.2 5.1 L6 12.3 Z"/><path d="M9.8 3.9 L12.1 6.2"/></g></svg>
<div id="t66" style="position:absolute;left:68.78px;top:739.00px;font-family:'Liberation Sans', sans-serif;font-size:16.526px;line-height:16.526px;font-weight:400;color:#6b6b6b;white-space:pre;letter-spacing:-0.010px;">Condition and Formula Help</div>
<div style="position:absolute;left:1056px;top:120px;width:239px;height:115px;background:#fff;border-radius:9px;box-shadow:0 0 0 1px rgba(0,0,0,0.03),0 6px 16px rgba(0,0,0,0.13);"></div>
<div id="t67" style="position:absolute;left:1070.57px;top:134.00px;font-family:'Liberation Sans', sans-serif;font-size:17.666px;line-height:17.666px;font-weight:400;color:#3a3a3a;white-space:pre;letter-spacing:0.046px;">Single Assignment</div>
<div id="t68" style="position:absolute;left:1070.31px;top:169.00px;font-family:'Liberation Sans', sans-serif;font-size:17.666px;line-height:17.666px;font-weight:400;color:#3a3a3a;white-space:pre;letter-spacing:0.108px;">Bulk Assignments</div>
<div id="t69" style="position:absolute;left:1070.18px;top:204.00px;font-family:'Liberation Sans', sans-serif;font-size:17.666px;line-height:17.666px;font-weight:400;color:#3a3a3a;white-space:pre;letter-spacing:0.036px;">Income Tax Slab</div>
<div style="position:absolute;left:342px;top:614px;width:1260px;height:256px;box-sizing:border-box;background:#fff;border:2px solid #d2d2d2;border-radius:13px;"></div>
<div id="t70" style="position:absolute;left:357.76px;top:632.00px;font-family:'Liberation Sans', sans-serif;font-size:21.408px;line-height:21.408px;font-weight:400;color:#2a2a2a;white-space:pre;letter-spacing:0.612px;-webkit-text-stroke:0.15px currentColor;">Condition and formula</div>
<svg style="left:0;top:0" width="1" height="1"><path d="M599 647.5 L605.5 641 L612 647.5" fill="none" stroke="#333" stroke-width="1.5" stroke-linecap="round" stroke-linejoin="round"/></svg>
<div id="t71" style="position:absolute;left:358.02px;top:678.00px;font-family:'Liberation Sans', sans-serif;font-size:17.666px;line-height:17.666px;font-weight:400;color:#6b6b6b;white-space:pre;letter-spacing:0.381px;">Condition</div>
<div style="position:absolute;left:358px;top:707px;width:603px;height:106px;background:#f3f3f3;border-radius:9px;overflow:hidden;"><div style="position:absolute;left:0;top:0;right:0;height:23px;background:#ebebeb;"></div></div>
<div id="t72" style="position:absolute;left:386.20px;top:712.00px;font-family:'Liberation Mono', monospace;font-size:16.400px;line-height:16.400px;font-weight:400;color:#8a8a8a;white-space:pre;letter-spacing:0.000px;">1</div>
<div id="t73" style="position:absolute;left:417.32px;top:712.00px;font-family:'Liberation Mono', monospace;font-size:16.400px;line-height:16.400px;font-weight:400;color:#2a2a2a;white-space:pre;letter-spacing:0.607px;">ge</div>
<div style="position:absolute;left:438.4px;top:710px;width:1.2000000000000455px;height:19px;background:#777;"></div>
<div id="t74" style="position:absolute;left:447.46px;top:712.00px;font-family:'Liberation Mono', monospace;font-size:16.400px;line-height:16.400px;font-weight:400;color:#3aa0b8;white-space:pre;letter-spacing:0.452px;">==</div>
<div id="t75" style="position:absolute;left:476.44px;top:712.00px;font-family:'Liberation Mono', monospace;font-size:16.400px;line-height:16.400px;font-weight:400;color:#7b9a1e;white-space:pre;letter-spacing:0.227px;">"Female"</div>
<div style="position:absolute;left:410.5px;top:729.5px;width:397px;height:138.5px;background:#fff;box-shadow:0 0 0 1px #e4e4e4,0 2px 6px rgba(0,0,0,0.08);"></div>
<div style="position:absolute;left:411px;top:730px;width:396px;height:22.399999999999977px;background:#c9d6f6;"></div>
<div id="t76" style="position:absolute;left:416.65px;top:736.00px;font-family:'Liberation Mono', monospace;font-size:16.370px;line-height:16.370px;font-weight:400;color:#1f1f1f;white-space:pre;letter-spacing:0.000px;"><span style="color:#3b67d6">ge</span>nder</div>
<div id="t77" style="position:absolute;left:662.65px;top:736.00px;font-family:'Liberation Mono', monospace;font-size:16.370px;line-height:16.370px;font-weight:400;color:#8c8c8c;white-space:pre;letter-spacing:0.141px;">Employee Field</div>
<div id="t78" style="position:absolute;left:416.65px;top:758.00px;font-family:'Liberation Mono', monospace;font-size:16.370px;line-height:16.370px;font-weight:400;color:#1f1f1f;white-space:pre;letter-spacing:0.000px;"><span style="color:#3b67d6">ge</span>tattr</div>
<div id="t79" style="position:absolute;left:730.73px;top:758.00px;font-family:'Liberation Mono', monospace;font-size:16.370px;line-height:16.370px;font-weight:400;color:#8c8c8c;white-space:pre;letter-spacing:0.405px;">keyword</div>
<div id="t80" style="position:absolute;left:416.65px;top:781.00px;font-family:'Liberation Mono', monospace;font-size:16.370px;line-height:16.370px;font-weight:400;color:#1f1f1f;white-space:pre;letter-spacing:0.000px;"><span style="color:#3b67d6">g</span>r…<span style="color:#3b67d6">e</span></div>
<div id="t81" style="position:absolute;left:476.47px;top:781.00px;font-family:'Liberation Mono', monospace;font-size:16.370px;line-height:16.370px;font-weight:400;color:#8c8c8c;white-space:pre;letter-spacing:0.048px;">Salary Structure Assignment Field</div>
<div id="t82" style="position:absolute;left:416.71px;top:803.00px;font-family:'Liberation Mono', monospace;font-size:16.370px;line-height:16.370px;font-weight:400;color:#1f1f1f;white-space:pre;letter-spacing:0.000px;">ima<span style="color:#3b67d6">ge</span></div>
<div id="t83" style="position:absolute;left:662.65px;top:803.00px;font-family:'Liberation Mono', monospace;font-size:16.370px;line-height:16.370px;font-weight:400;color:#8c8c8c;white-space:pre;letter-spacing:0.141px;">Employee Field</div>
<div id="t84" style="position:absolute;left:416.38px;top:826.00px;font-family:'Liberation Mono', monospace;font-size:16.370px;line-height:16.370px;font-weight:400;color:#1f1f1f;white-space:pre;letter-spacing:0.000px;">tar<span style="color:#3b67d6">ge</span>t_working_hours</div>
<div id="t85" style="position:absolute;left:633.57px;top:826.00px;font-family:'Liberation Mono', monospace;font-size:16.370px;line-height:16.370px;font-weight:400;color:#8c8c8c;white-space:pre;letter-spacing:0.090px;">Salary Slip Field</div>
<div id="t86" style="position:absolute;left:416.81px;top:848.00px;font-family:'Liberation Mono', monospace;font-size:16.370px;line-height:16.370px;font-weight:400;color:#1f1f1f;white-space:pre;letter-spacing:0.000px;">emer<span style="color:#3b67d6">ge</span>ncy_phone_number</div>
<div id="t87" style="position:absolute;left:662.65px;top:848.00px;font-family:'Liberation Mono', monospace;font-size:16.370px;line-height:16.370px;font-weight:400;color:#8c8c8c;white-space:pre;letter-spacing:0.141px;">Employee Field</div>
<div style="position:absolute;left:1001.1px;top:674.9px;width:18.799999999999955px;height:18.799999999999955px;background:#6b6b6b;border-radius:4px;"></div>
<svg style="left:0;top:0" width="1" height="1"><path d="M1006.9 684.5 L1009.3 686.9 L1014.3 681.6999999999999" fill="none" stroke="#fff" stroke-width="1.7" stroke-linecap="round" stroke-linejoin="round"/></svg>
<div id="t88" style="position:absolute;left:1031.24px;top:676.00px;font-family:'Liberation Sans', sans-serif;font-size:18.609px;line-height:18.609px;font-weight:400;color:#2b2b2b;white-space:pre;letter-spacing:-0.115px;-webkit-text-stroke:0.15px currentColor;">Amount based on formula</div>
<div id="t89" style="position:absolute;left:1000.31px;top:714.00px;font-family:'Liberation Sans', sans-serif;font-size:17.815px;line-height:17.815px;font-weight:400;color:#6b6b6b;white-space:pre;letter-spacing:-0.063px;">Formula</div>
<div style="position:absolute;left:1001.5px;top:743px;width:583.5px;height:105px;background:#f3f3f3;border-radius:9px;overflow:hidden;"><div style="position:absolute;left:0;top:0;right:0;height:20.5px;background:#ebebeb;"></div></div>
<div id="t90" style="position:absolute;left:1029.58px;top:748.00px;font-family:'Liberation Mono', monospace;font-size:16.400px;line-height:16.400px;font-weight:400;color:#8a8a8a;white-space:pre;letter-spacing:0.000px;">1</div>
<div id="t91" style="position:absolute;left:1060.32px;top:748.00px;font-family:'Liberation Mono', monospace;font-size:16.400px;line-height:16.400px;font-weight:400;color:#2a2a2a;white-space:pre;letter-spacing:0.323px;">base</div>
<div id="t92" style="position:absolute;left:1110.28px;top:748.00px;font-family:'Liberation Mono', monospace;font-size:16.400px;line-height:16.400px;font-weight:400;color:#3aa0b8;white-space:pre;letter-spacing:0.000px;">*</div>
<div id="t93" style="position:absolute;left:1129.93px;top:748.00px;font-family:'Liberation Mono', monospace;font-size:16.400px;line-height:16.400px;font-weight:400;color:#e8912c;white-space:pre;letter-spacing:0.504px;">0.4</div>
<div style="position:absolute;left:1162px;top:746px;width:1.2000000000000455px;height:16px;background:#d8d8d8;"></div>
</body></html>
